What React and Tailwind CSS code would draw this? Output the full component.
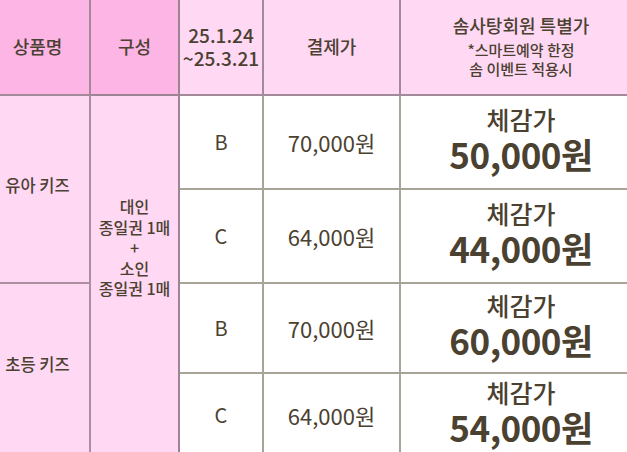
const rows = [
  { grade: 'B', pay: '70,000원', price: '50,000원', h: 'row-start-2' },
  { grade: 'C', pay: '64,000원', price: '44,000원', h: 'row-start-3' },
  { grade: 'B', pay: '70,000원', price: '60,000원', h: 'row-start-4' },
  { grade: 'C', pay: '64,000원', price: '54,000원', h: 'row-start-5' },
];

const App = () => {
  return (
    <div className="w-[627px] h-[452px] overflow-hidden bg-white text-[#4b4131]" style={{ fontFamily: '"Noto Sans CJK KR", "Noto Sans", sans-serif' }}>
      <div className="grid grid-cols-[91px_89px_84px_137px_226px] grid-rows-[96px_94px_94px_90px_84px]">
        {/* header */}
        <div className="bg-[#fdb5e5] border-r-2 border-b-2 border-[#a38a9a] flex items-center justify-center pr-[14px] pb-[2px] text-[18px] font-medium">상품명</div>
        <div className="bg-[#fdb5e5] border-r-2 border-b-2 border-[#9d8494] flex items-center justify-center pb-[2px] text-[18px] font-medium">구성</div>
        <div className="bg-[#ffd8f3] border-r-2 border-b-2 border-[#a38a9a] flex flex-col items-center justify-center text-[19px] leading-[23px] font-medium pb-[2px]">
          <span>25.1.24</span>
          <span>~25.3.21</span>
        </div>
        <div className="bg-[#ffd8f3] border-r-2 border-b-2 border-[#a38a9a] flex items-center justify-center pb-[2px] text-[18px] font-medium">결제가</div>
        <div className="bg-[#ffd8f3] border-b-2 border-[#a38a9a] flex flex-col items-center justify-center pl-[14px] font-medium pb-[4px]">
          <span className="text-[18px] leading-[24px] mb-[3px]">솜사탕회원 특별가</span>
          <span className="text-[15px] leading-[19px]">*스마트예약 한정</span>
          <span className="text-[15px] leading-[19px]">솜 이벤트 적용시</span>
        </div>

        {/* product column */}
        <div className="row-start-2 row-span-2 col-start-1 bg-[#ffd8f3] border-r-2 border-b-2 border-[#a98f9f] flex items-center justify-center pr-[14px] pb-[8px] text-[16.5px] font-medium">유아 키즈</div>
        <div className="row-start-4 row-span-2 col-start-1 bg-[#ffd8f3] border-r-2 border-[#a98f9f] flex items-center justify-center pr-[14px] pb-[14px] text-[16.5px] font-medium">초등 키즈</div>

        {/* composition column */}
        <div className="row-start-2 row-span-4 col-start-2 bg-[#ffd8f3] border-r-2 border-[#9d8494] flex flex-col items-center pt-[100px] text-[16px] leading-[20.5px] font-medium">
          <span>대인</span>
          <span>종일권 1매</span>
          <span>+</span>
          <span>소인</span>
          <span>종일권 1매</span>
        </div>

        {rows.map((r, i) => (
          <div key={i} className="contents">
            <div className={`${r.h} col-start-3 border-r-2 border-b-2 border-[#a8a498] flex items-center justify-center text-[20px]`}>{r.grade}</div>
            <div className={`${r.h} col-start-4 border-r-2 border-b-2 border-[#a8a498] flex items-center justify-center text-[22px]`}>{r.pay}</div>
            <div className={`${r.h} col-start-5 border-b-2 border-[#a8a498] flex flex-col items-center justify-center pl-[14px]`}>
              <span className="text-[25px] leading-[28px] font-medium -mt-[4px]">체감가</span>
              <span className="text-[35px] leading-[42px] font-bold tracking-[-0.5px]">{r.price}</span>
            </div>
          </div>
        ))}
      </div>
    </div>
  );
};

export default App;
